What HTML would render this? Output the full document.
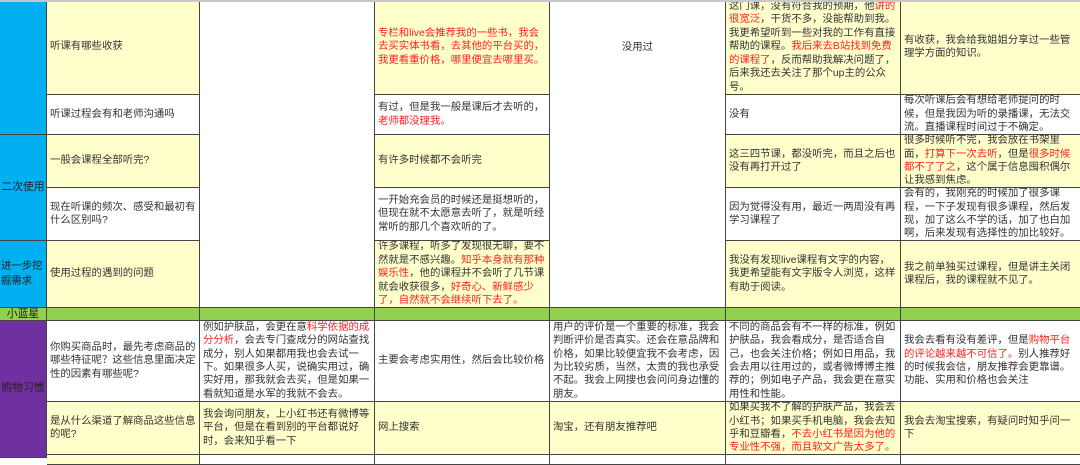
<!DOCTYPE html>
<html><head><meta charset="utf-8"><style>
html,body{margin:0;padding:0;background:#fff;}
body{width:1080px;height:458px;position:relative;overflow:hidden;font-family:"Liberation Sans","Noto Sans CJK SC",sans-serif;font-size:10.4px;line-height:13.4px;color:#333;}
.c{position:absolute;box-sizing:border-box;border-right:1px solid #444;border-bottom:1px solid #444;display:flex;align-items:center;padding:0 3px;overflow:hidden;}
.c>div{width:100%;}
.y{background:#ffffcc;}
.w{background:#fff;}
.ctr{justify-content:center;text-align:center;}
.r{color:#ff2020;}
.top{position:absolute;left:0;top:0;width:1080px;height:2px;background:#c8c8c8;}
.a{font-size:10.8px;}
</style></head><body>

<!-- column A -->
<div class="c ctr" style="left:0;top:0;width:47px;height:135px;background:#00b0f0;"></div>
<div class="c ctr a" style="left:0;top:135px;width:47px;height:106px;background:#00b0f0;color:#222;padding:0;"><div>二次使用</div></div>
<div class="c a" style="left:0;top:241px;width:47px;height:67px;background:#00b0f0;color:#222;padding:0 0 0 1px;line-height:15px;font-size:10.4px;"><div>进一步挖掘需求</div></div>
<div class="c ctr a" style="left:0;top:308px;width:47px;height:13px;background:#92d050;color:#222;line-height:12px;"><div>小蓝星</div></div>
<div class="c ctr a" style="left:0;top:321px;width:47px;height:137px;background:#7030a0;color:#222;padding:0;"><div>购物习惯</div></div>

<!-- column B -->
<div class="c y" style="left:47px;top:0;width:153px;height:95px;"><div>听课有哪些收获</div></div>
<div class="c w" style="left:47px;top:95px;width:153px;height:40px;"><div>听课过程会有和老师沟通吗</div></div>
<div class="c y" style="left:47px;top:135px;width:153px;height:53px;"><div>一般会课程全部听完?</div></div>
<div class="c w" style="left:47px;top:188px;width:153px;height:53px;"><div>现在听课的频次、感受和最初有什么区别吗?</div></div>
<div class="c y" style="left:47px;top:241px;width:153px;height:67px;"><div>使用过程的遇到的问题</div></div>
<div class="c" style="left:47px;top:308px;width:153px;height:13px;background:#92d050;"></div>
<div class="c w" style="left:47px;top:321px;width:153px;height:81px;"><div>你购买商品时，最先考虑商品的哪些特征呢？这些信息里面决定性的因素有哪些呢?</div></div>
<div class="c y" style="left:47px;top:402px;width:153px;height:53px;"><div>是从什么渠道了解商品这些信息的呢?</div></div>
<div class="c y" style="left:47px;top:455px;width:153px;height:10px;"></div>

<!-- column C -->
<div class="c w ctr" style="left:200px;top:-10px;width:175px;height:318px;align-items:flex-start;"><div>没用过</div></div>
<div class="c" style="left:200px;top:308px;width:175px;height:13px;background:#92d050;"></div>
<div class="c w" style="left:200px;top:321px;width:175px;height:81px;"><div>例如护肤品，会更在意<span class="r">科学依据的成分分析</span>，会去专门查成分的网站查找成分，别人如果都用我也会去试一下。如果很多人买，说确实用过，确实好用，那我就会去买，但是如果一看就知道是水军的我就不会去。</div></div>
<div class="c y" style="left:200px;top:402px;width:175px;height:53px;"><div>我会询问朋友，上小红书还有微博等平台，但是在看到别的平台都说好时，会来知乎看一下</div></div>
<div class="c w" style="left:200px;top:455px;width:175px;height:10px;"></div>

<!-- column D -->
<div class="c y" style="left:375px;top:0;width:175px;height:95px;"><div class="r">专栏和live会推荐我的一些书，我会去买实体书看，去其他的平台买的，我更看重价格，哪里便宜去哪里买。</div></div>
<div class="c w" style="left:375px;top:95px;width:175px;height:40px;"><div>有过，但是我一般是课后才去听的，<span class="r">老师都没理我。</span></div></div>
<div class="c y" style="left:375px;top:135px;width:175px;height:53px;"><div>有许多时候都不会听完</div></div>
<div class="c w" style="left:375px;top:188px;width:175px;height:53px;"><div>一开始充会员的时候还是挺想听的，但现在就不太愿意去听了，就是听经常听的那几个喜欢听的了。</div></div>
<div class="c y" style="left:375px;top:241px;width:175px;height:67px;"><div>许多课程，听多了发现很无聊，要不然就是不感兴趣。<span class="r">知乎本身就有那种娱乐性</span>，他的课程并不会听了几节课就会收获很多，<span class="r">好奇心、新鲜感少了，自然就不会继续听下去了。</span></div></div>
<div class="c" style="left:375px;top:308px;width:175px;height:13px;background:#92d050;"></div>
<div class="c w" style="left:375px;top:321px;width:175px;height:81px;"><div>主要会考虑实用性，然后会比较价格</div></div>
<div class="c y" style="left:375px;top:402px;width:175px;height:53px;"><div>网上搜索</div></div>
<div class="c w" style="left:375px;top:455px;width:175px;height:10px;"></div>

<!-- column E -->
<div class="c w ctr" style="left:550px;top:0;width:176px;height:95px;border-bottom:none;"><div>没用过</div></div>
<div class="c w" style="left:550px;top:94px;width:176px;height:214px;"></div>
<div class="c" style="left:550px;top:308px;width:176px;height:13px;background:#92d050;"></div>
<div class="c w" style="left:550px;top:321px;width:176px;height:81px;"><div>用户的评价是一个重要的标准，我会判断评价是否真实。还会在意品牌和价格，如果比较便宜我不会考虑，因为比较劣质，当然，太贵的我也承受不起。我会上网搜也会问问身边懂的朋友。</div></div>
<div class="c y" style="left:550px;top:402px;width:176px;height:53px;"><div>淘宝，还有朋友推荐吧</div></div>
<div class="c w" style="left:550px;top:455px;width:176px;height:10px;"></div>

<!-- column F -->
<div class="c y" style="left:726px;top:0;width:175px;height:95px;"><div>这门课，没有符合我的预期，他<span class="r">讲的很宽泛</span>，干货不多，没能帮助到我。我更希望听到一些对我的工作有直接帮助的课程。<span class="r">我后来去B站找到免费的课程了</span>，反而帮助我解决问题了，后来我还去关注了那个up主的公众号。</div></div>
<div class="c w" style="left:726px;top:95px;width:175px;height:40px;"><div>没有</div></div>
<div class="c y" style="left:726px;top:135px;width:175px;height:53px;"><div>这三四节课，都没听完，而且之后也没有再打开过了</div></div>
<div class="c w" style="left:726px;top:188px;width:175px;height:53px;"><div>因为觉得没有用，最近一两周没有再学习课程了</div></div>
<div class="c y" style="left:726px;top:241px;width:175px;height:67px;"><div>我没有发现live课程有文字的内容，我更希望能有文字版令人浏览，这样有助于阅读。</div></div>
<div class="c" style="left:726px;top:308px;width:175px;height:13px;background:#92d050;"></div>
<div class="c w" style="left:726px;top:321px;width:175px;height:81px;"><div>不同的商品会有不一样的标准，例如护肤品，我会看成分，是否适合自己，也会关注价格；例如日用品，我会去用以往用过的，或者微博博主推荐的；例如电子产品，我会更在意实用性和性能。</div></div>
<div class="c y" style="left:726px;top:402px;width:175px;height:53px;"><div>如果买我不了解的护肤产品，我会去小红书；如果买手机电脑，我会去知乎和豆瓣看，<span class="r">不去小红书是因为他的专业性不强，而且软文广告太多了。</span></div></div>
<div class="c w" style="left:726px;top:455px;width:175px;height:10px;"></div>

<!-- column G -->
<div class="c y" style="left:901px;top:0;width:180px;height:95px;"><div>有收获，我会给我姐姐分享过一些管理学方面的知识。</div></div>
<div class="c w" style="left:901px;top:95px;width:180px;height:40px;"><div>每次听课后会有想给老师提问的时候，但是我因为听的录播课，无法交流。直播课程时间过于不确定。</div></div>
<div class="c y" style="left:901px;top:135px;width:180px;height:53px;"><div>很多时候听不完，我会放在书架里面，<span class="r">打算下一次去听</span>，但是<span class="r">很多时候都不了了之</span>，这个属于信息囤积偶尔让我感到焦虑。</div></div>
<div class="c w" style="left:901px;top:188px;width:180px;height:53px;"><div>会有的，我刚充的时候加了很多课程，一下子发现有很多课程，然后发现，加了这么不学的话，加了也白加啊，后来发现有选择性的加比较好。</div></div>
<div class="c y" style="left:901px;top:241px;width:180px;height:67px;"><div>我之前单独买过课程，但是讲主关闭课程后，我的课程就不见了。</div></div>
<div class="c" style="left:901px;top:308px;width:180px;height:13px;background:#92d050;"></div>
<div class="c w" style="left:901px;top:321px;width:180px;height:81px;"><div>我会去看有没有差评，但是<span class="r">购物平台的评论越来越不可信了。</span>别人推荐好的时候我会信，朋友推荐会更靠谱。功能、实用和价格也会关注</div></div>
<div class="c y" style="left:901px;top:402px;width:180px;height:53px;"><div>我会去淘宝搜索，有疑问时知乎问一下</div></div>
<div class="c w" style="left:901px;top:455px;width:180px;height:10px;"></div>

<div class="top"></div>
</body></html>
